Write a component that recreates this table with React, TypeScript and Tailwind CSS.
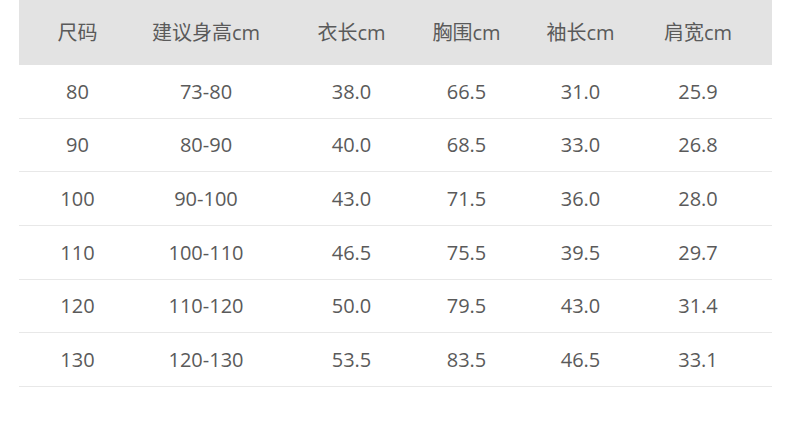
const headers = ["尺码", "建议身高cm", "衣长cm", "胸围cm", "袖长cm", "肩宽cm"];

const rows = [
  ["80", "73-80", "38.0", "66.5", "31.0", "25.9"],
  ["90", "80-90", "40.0", "68.5", "33.0", "26.8"],
  ["100", "90-100", "43.0", "71.5", "36.0", "28.0"],
  ["110", "100-110", "46.5", "75.5", "39.5", "29.7"],
  ["120", "110-120", "50.0", "79.5", "43.0", "31.4"],
  ["130", "120-130", "53.5", "83.5", "46.5", "33.1"],
];

// column centers follow the original layout, last track is just leftover space
const cols = "grid grid-cols-[117px_140px_151px_79px_149px_86px_1fr] items-center";

export default function App() {
  return (
    <div
      className="w-[790px] h-[431px] bg-white pl-[19px] pr-[18px] text-[#5a5a5a] text-[20px]"
      style={{ fontFamily: '"Open Sans", "Noto Sans CJK SC", sans-serif' }}
    >
      <div className={`${cols} h-[65px] pt-px bg-[#e3e3e3]`}>
        {headers.map((h) => (
          <div key={h} className="text-center whitespace-nowrap">
            {h}
          </div>
        ))}
        <div />
      </div>
      {rows.map((r) => (
        <div key={r[0]} className={`${cols} h-[53.67px] pt-px border-b border-[#e8e8e8]`}>
          {r.map((v, i) => (
            <div key={i} className="text-center whitespace-nowrap">
              {v}
            </div>
          ))}
          <div />
        </div>
      ))}
    </div>
  );
}
